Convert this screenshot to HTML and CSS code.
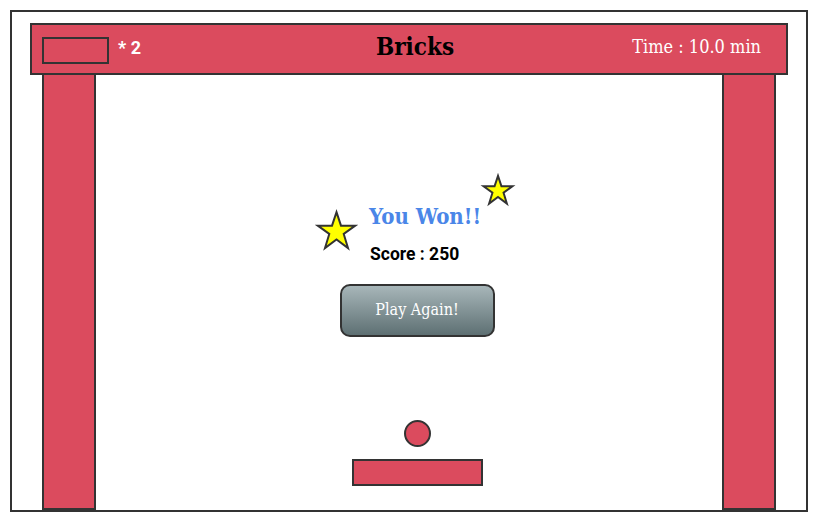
FILE: index.html
```html
<!DOCTYPE html>
<html lang="en">
<head>
<meta charset="utf-8">
<title>Bricks</title>
<link rel="stylesheet" href="styles.css">
</head>
<body>
<div class="frame">
  <header class="bar">
    <div class="lives">
      <span class="life-paddle"></span>
      <span class="lives-count">* 2</span>
    </div>
    <h1 class="title">Bricks</h1>
    <div class="time">Time : 10.0 min</div>
  </header>
  <div class="arena">
    <div class="pillar"></div>
    <main class="field">
      <div class="message">
        <svg class="star star-big" viewBox="0 0 100 100"><polygon points="50,3 61.5,37.5 98,37.5 68.5,59 79.5,95 50,73 20.5,95 31.5,59 2,37.5 38.5,37.5"/></svg>
        <svg class="star star-small" viewBox="0 0 100 100"><polygon points="50,3 61.5,37.5 98,37.5 68.5,59 79.5,95 50,73 20.5,95 31.5,59 2,37.5 38.5,37.5"/></svg>
        <h2 class="won">You Won!!</h2>
        <p class="score">Score : 250</p>
      </div>
      <button class="again">Play Again!</button>
      <div class="ball"></div>
      <div class="paddle"></div>
    </main>
    <div class="pillar"></div>
  </div>
</div>
</body>
</html>
```

FILE: styles.css
```css
body {
  margin: 0;
  background: #fff;
}

.frame {
  margin: 10px;
  width: 798px;
  height: 502px;
  box-sizing: border-box;
  border: 2px solid #333;
  display: flex;
  flex-direction: column;
}

.bar {
  margin: 11px 18px 0;
  height: 52px;
  flex: none;
  box-sizing: border-box;
  border: 2px solid #333;
  background: #db4b5e;
  display: grid;
  grid-template-columns: 1fr auto 1fr;
  align-items: center;
  padding: 0 25px 0 10px;
  position: relative;
  z-index: 1;
}

.lives {
  display: flex;
  align-items: center;
  gap: 9px;
}

.life-paddle {
  width: 67px;
  height: 27px;
  box-sizing: border-box;
  border: 2px solid #333;
  margin-top: 3px;
}

.lives-count {
  font-family: Roboto, "Liberation Sans", sans-serif;
  font-weight: 700;
  font-size: 18px;
  line-height: 22px;
  color: #fff;
  margin-top: -3px;
}

.title {
  margin: -5px 0 0 27px;
  font-family: "DejaVu Serif Condensed", "DejaVu Serif", serif;
  font-weight: 700;
  font-size: 24px;
  line-height: 28px;
  color: #000;
}

.time {
  justify-self: end;
  font-family: "DejaVu Serif Condensed", "DejaVu Serif", serif;
  font-size: 18px;
  line-height: 22px;
  color: #fff;
  margin-top: -5px;
}

.arena {
  flex: 1;
  display: flex;
  padding: 0 30px;
}

.pillar {
  width: 54px;
  flex: none;
  box-sizing: border-box;
  border: 2px solid #333;
  border-top: 0;
  background: #db4b5e;
}

.field {
  flex: 1;
  display: flex;
  flex-direction: column;
  align-items: center;
  padding: 0 0 24px 16px;
}

.message {
  align-self: flex-start;
  margin: 127px 0 0 257px;
  position: relative;
}

.star {
  position: absolute;
  overflow: visible;
}

.star polygon {
  fill: #ffff00;
  stroke: #333;
  stroke-width: 2;
  vector-effect: non-scaling-stroke;
  stroke-linejoin: miter;
}

.star-big {
  left: -52px;
  top: 9px;
  width: 39px;
  height: 39px;
}

.star-small {
  left: 114px;
  top: -27px;
  width: 30px;
  height: 30px;
}

.won {
  margin: 0;
  font-family: "DejaVu Serif Condensed", "DejaVu Serif", serif;
  font-weight: 700;
  font-size: 22px;
  line-height: 28px;
  color: #4a86e8;
  white-space: nowrap;
}

.score {
  margin: 13px 0 0 1px;
  font-family: Roboto, "Liberation Sans", sans-serif;
  font-weight: 700;
  font-size: 17.5px;
  line-height: 22px;
  color: #000;
  white-space: nowrap;
}

.again {
  margin-top: 19px;
  width: 155px;
  height: 53px;
  box-sizing: border-box;
  border: 2px solid #333;
  border-radius: 10px;
  background: linear-gradient(#a7b6b9, #5e7073);
  color: #fff;
  font-family: "DejaVu Serif Condensed", "DejaVu Serif", serif;
  font-size: 16px;
  padding: 0 0 3px;
}

.ball {
  margin-top: auto;
  width: 27px;
  height: 27px;
  box-sizing: border-box;
  border: 2px solid #333;
  border-radius: 50%;
  background: #db4b5e;
}

.paddle {
  margin-top: 12px;
  width: 131px;
  height: 27px;
  box-sizing: border-box;
  border: 2px solid #333;
  background: #db4b5e;
}
```
